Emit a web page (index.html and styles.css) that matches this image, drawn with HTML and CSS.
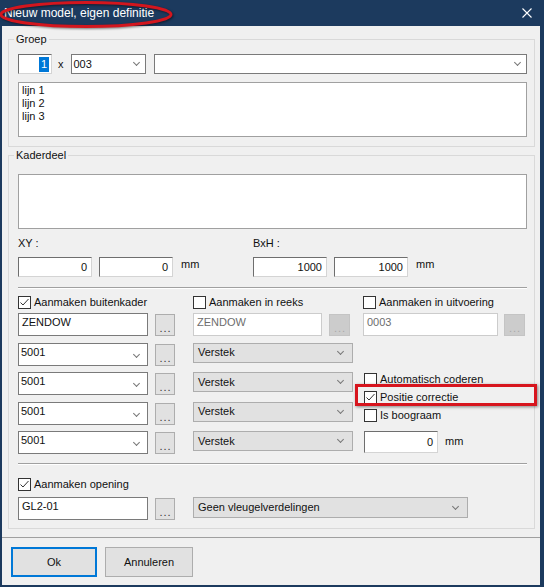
FILE: index.html
```html
<!DOCTYPE html>
<html>
<head>
  <title>Nieuw model, eigen definitie</title>
  <link rel="stylesheet" href="styles.css">
</head>
<body>

<div class="window">
  <div class="titlebar">
    <span class="title">Nieuw model, eigen definitie</span>
    <svg class="close" width="10" height="10" viewBox="0 0 10 10">
      <path d="M0.5 0.5 L9.5 9.5 M9.5 0.5 L0.5 9.5" stroke="#fff" stroke-width="1.1" fill="none"/>
    </svg>
  </div>

  <div class="client">
    <!-- Groep -->
    <fieldset class="group group-top">
      <legend>Groep</legend>
      <div class="groep-row">
        <div class="num small"><span class="sel">1</span></div>
        <span class="x">x</span>
        <div class="combo w75">003</div>
        <div class="combo grow"></div>
      </div>
      <div class="memo">lijn 1<br>lijn 2<br>lijn 3</div>
    </fieldset>

    <!-- Kaderdeel -->
    <fieldset class="group group-main">
      <legend>Kaderdeel</legend>
      <div class="memo"></div>

      <div class="dims">
        <div class="dim first">
          <div class="dim-label">XY :</div>
          <div class="dim-inputs">
            <div class="num">0</div>
            <div class="num">0</div>
            <span class="unit">mm</span>
          </div>
        </div>
        <div class="dim">
          <div class="dim-label">BxH :</div>
          <div class="dim-inputs">
            <div class="num">1000</div>
            <div class="num">1000</div>
            <span class="unit">mm</span>
          </div>
        </div>
      </div>

      <div class="sep sep-a"></div>

      <div class="cols checks">
        <label class="chk"><span class="box checked"><svg width="11" height="11" viewBox="0 0 11 11"><path d="M1.5 5.5 L4 8 L9.5 2" stroke="#333" stroke-width="1" fill="none"/></svg></span>Aanmaken buitenkader</label>
        <label class="chk"><span class="box"></span>Aanmaken in reeks</label>
        <label class="chk"><span class="box"></span>Aanmaken in uitvoering</label>
      </div>

      <div class="cols rows">
        <div class="pair">
          <div class="edit w130">ZENDOW</div>
          <div class="dots">...</div>
        </div>
        <div class="pair">
          <div class="edit w129 off">ZENDOW</div>
          <div class="dots off">...</div>
        </div>
        <div class="pair tight">
          <div class="edit w135 off">0003</div>
          <div class="dots off">...</div>
        </div>

        <div class="pair">
          <div class="combo w130 tall">5001</div>
          <div class="dots">...</div>
        </div>
        <div class="combo grey w160">Verstek</div>
        <div></div>

        <div class="pair">
          <div class="combo w130 tall">5001</div>
          <div class="dots">...</div>
        </div>
        <div class="combo grey w160">Verstek</div>
        <div class="stack">
          <label class="chk"><span class="box"></span>Automatisch coderen</label>
          <label class="chk"><span class="box checked"><svg width="11" height="11" viewBox="0 0 11 11"><path d="M1.5 5.5 L4 8 L9.5 2" stroke="#333" stroke-width="1" fill="none"/></svg></span>Positie correctie</label>
          <label class="chk"><span class="box"></span>Is boograam</label>
        </div>

        <div class="pair">
          <div class="combo w130 tall">5001</div>
          <div class="dots">...</div>
        </div>
        <div class="combo grey w160">Verstek</div>

        <div class="pair">
          <div class="combo w130 tall">5001</div>
          <div class="dots">...</div>
        </div>
        <div class="combo grey w160">Verstek</div>
        <div class="offset-row">
          <div class="num w74 h22">0</div>
          <span class="unit">mm</span>
        </div>
      </div>

      <div class="sep sep-b"></div>

      <label class="chk opening"><span class="box checked"><svg width="11" height="11" viewBox="0 0 11 11"><path d="M1.5 5.5 L4 8 L9.5 2" stroke="#333" stroke-width="1" fill="none"/></svg></span>Aanmaken opening</label>

      <div class="cols opening-row">
        <div class="pair">
          <div class="edit w130">GL2-01</div>
          <div class="dots">...</div>
        </div>
        <div class="combo grey wide">Geen vleugelverdelingen</div>
      </div>
    </fieldset>

    <div class="footer">
      <div class="btn default">Ok</div>
      <div class="btn">Annuleren</div>
    </div>
  </div>

  <!-- annotations drawn on top of the screenshot -->
  <svg class="mark-ellipse" width="180" height="32" viewBox="0 0 180 32">
    <ellipse cx="86" cy="14.5" rx="85" ry="12" fill="none" stroke="#d3161e" stroke-width="3"/>
  </svg>
  <div class="mark-box"></div>
</div>

</body>
</html>
```

FILE: styles.css
```css
* {
  box-sizing: border-box;
}

body {
  margin: 0;
  background: #1c3a5e;
  font-family: "Liberation Sans", Arial, sans-serif;
  font-size: 11px;
  color: #111;
}

.window {
  position: relative;
  width: 544px;
  height: 587px;
  display: flex;
  flex-direction: column;
  overflow: hidden;
}

/* Title bar */
.titlebar {
  height: 26px;
  flex: none;
  display: flex;
  align-items: center;
  justify-content: space-between;
  padding: 0 12px 0 4px;
  color: #fff;
  font-size: 12px;
}

.close {
  display: block;
}

/* Dialog body */
.client {
  flex: 1;
  margin: 0 4px 2px 2px;
  background: #f0f0f0;
  display: flex;
  flex-direction: column;
}

.group {
  margin: 0 5px 0 6px;
  border: 1px solid #d9d9d9;
  min-width: 0;
}

.group legend {
  padding: 0 2px;
  margin-left: -4px;
  line-height: 13px;
}

.group-top {
  margin-top: 7px;
  padding: 8px 7px 9px 9px;
}

.group-main {
  margin-top: 2px;
  padding: 12px 7px 8px 9px;
}

/* Controls */
.edit,
.num,
.combo,
.memo {
  background: #fff;
  line-height: 13px;
}

.edit {
  height: 23px;
  border: 1px solid #7a7a7a;
  padding: 2px 3px 0;
}

.edit.off {
  border-color: #cccccc;
  color: #6d6d6d;
}

.num {
  height: 20px;
  width: 74px;
  border: 1px solid;
  border-color: #6e6e6e #d4d4d4 #d4d4d4 #6e6e6e;
  display: flex;
  align-items: center;
  justify-content: flex-end;
  padding-right: 4px;
}

.num.small {
  width: 34px;
  padding-right: 2px;
}

.sel {
  background: #0078d7;
  color: #fff;
  padding: 1px 2px;
}

.combo {
  height: 20px;
  border: 1px solid #7a7a7a;
  display: flex;
  align-items: center;
  padding-left: 2px;
}

.combo::after {
  content: "";
  width: 4px;
  height: 4px;
  border-right: 1px solid #777;
  border-bottom: 1px solid #777;
  transform: rotate(45deg);
  margin: -3px 8px 0 auto;
}

.combo.tall {
  height: 23px;
  align-items: flex-start;
  padding-top: 2px;
}

.combo.tall::after {
  margin-top: 6px;
}

.combo.grey {
  background: #e1e1e1;
  border-color: #adadad;
  padding-left: 4px;
}

.combo.grey::after {
  margin-right: 9px;
}

.memo {
  height: 55px;
  border: 1px solid #a0a0a0;
  padding: 1px 3px;
}

.dots {
  width: 20px;
  height: 22px;
  margin-top: 1px;
  background: #e1e1e1;
  border: 1px solid #adadad;
  display: flex;
  align-items: flex-end;
  justify-content: center;
  letter-spacing: 1px;
  line-height: 11px;
  padding: 0 0 1px 1px;
  color: #333;
}

.dots.off {
  width: 21px;
  background: #cccccc;
  border-color: #c4c4c4;
  color: #a8a8a8;
}

.w75 { width: 75px; }
.w74 { width: 74px; }
.w129 { width: 129px; }
.w130 { width: 130px; }
.w135 { width: 135px; }
.w160 { width: 160px; }
.h22 { height: 22px; }

.grow {
  flex: 1;
}

/* Groep */
.groep-row {
  display: flex;
  align-items: center;
  height: 20px;
  margin-bottom: 8px;
}

.x {
  margin: 0 7px 0 6px;
}

.groep-row .grow {
  margin-left: 8px;
}

.groep-row .combo::after {
  margin-right: 6px;
}

/* XY / BxH */
.dims {
  display: flex;
  margin-top: 8px;
}

.dim.first {
  width: 235px;
}

.dim-label {
  line-height: 13px;
  height: 13px;
  margin-bottom: 7px;
}

.dim-inputs {
  display: flex;
  gap: 7px;
  align-items: flex-start;
}

.unit {
  line-height: 13px;
  margin-top: 1px;
  margin-left: 1px;
}

.sep {
  border-top: 1px solid #a0a0a0;
  border-bottom: 1px solid #fff;
}

.sep-a {
  margin-top: 10px;
}

.sep-b {
  margin-top: 9px;
}

/* Aanmaken columns */
.cols {
  display: grid;
  grid-template-columns: 175px 170px 1fr;
}

.checks {
  margin-top: 7px;
}

.rows {
  margin-top: 4px;
  grid-auto-rows: 23px;
  row-gap: 6.5px;
}

.chk {
  display: flex;
  align-items: center;
  gap: 3px;
  line-height: 13px;
  height: 13px;
}

.box {
  width: 13px;
  height: 13px;
  border: 1px solid #333;
  background: #fff;
  display: flex;
  flex: none;
}

.pair {
  display: flex;
  gap: 7px;
  align-items: flex-start;
}

.pair.tight {
  gap: 6px;
}

.stack {
  grid-row: span 2;
  display: flex;
  flex-direction: column;
  gap: 5px;
  padding: 1px 0 0 1px;
}

.offset-row {
  display: flex;
  gap: 6px;
  padding-left: 1px;
}

.offset-row .unit {
  margin-top: 4px;
}

.opening {
  margin-top: 13px;
}

.opening-row {
  margin-top: 6px;
}

.combo.wide {
  grid-column: span 2;
  width: 275px;
  height: 21px;
}

/* Buttons */
.footer {
  margin-top: 8px;
  border-top: 1px solid #a0a0a0;
  padding: 9px 9px 0;
  display: flex;
  gap: 8px;
}

.btn {
  width: 88px;
  height: 30px;
  background: #e1e1e1;
  border: 1px solid #adadad;
  display: flex;
  align-items: center;
  justify-content: center;
}

.btn.default {
  width: 86px;
  border: 2px solid #0078d7;
}

/* Red annotations */
.mark-ellipse {
  position: absolute;
  left: 0;
  top: 0;
  filter: drop-shadow(1px 1px 1px rgba(0, 0, 0, 0.5));
}

.mark-box {
  position: absolute;
  left: 355px;
  top: 384px;
  width: 182px;
  height: 22px;
  border: 3px solid #d7151e;
  box-shadow: 1px 1px 3px rgba(0, 0, 0, 0.45);
}
```
